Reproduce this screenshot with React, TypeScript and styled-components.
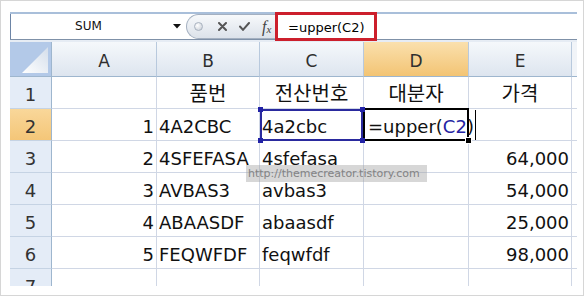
import React from 'react';
import styled, { createGlobalStyle } from 'styled-components';

const GlobalStyle = createGlobalStyle`
  html, body {
    margin: 0;
    padding: 0;
    background: #fff;
  }
  body {
    font-family: "DejaVu Sans", "Noto Sans CJK KR", sans-serif;
  }
`;

const Frame = styled.div`
  box-sizing: border-box;
  width: 584px;
  height: 296px;
  border: 1px solid #d6d6d6;
  padding: 11px 0 0 9px;
  background: #fff;
`;

const ExcelWindow = styled.div`
  width: 567px;
  display: flex;
  flex-direction: column;
  background: #e6ecf4;
`;

const FormulaBar = styled.div`
  display: flex;
  height: 25px;
  border-top: 2px solid #a9bfda;
  border-bottom: 1px solid #7f91a8;
  margin-bottom: 2px;
  background: #fff;
`;

const NameBox = styled.div`
  display: flex;
  align-items: center;
  width: 176px;
  border-left: 1px solid #6d85a6;
  box-sizing: border-box;
  padding-right: 5px;
`;

const NameText = styled.span`
  flex: 1;
  text-align: center;
  padding-right: 7px;
  font-size: 12px;
  line-height: 25px;
  color: #111;
`;

const ButtonStrip = styled.div`
  box-sizing: border-box;
  display: flex;
  align-items: center;
  gap: 12px;
  width: 89px;
  padding-left: 7px;
  border: 1px solid #a4b0c0;
  border-right: none;
  border-radius: 13px 0 0 13px;
  background: linear-gradient(#f7f9fb, #dce2ea);
`;

const Dot = styled.span`
  box-sizing: border-box;
  width: 9px;
  height: 9px;
  margin-right: 3px;
  border-radius: 50%;
  border: 1px solid #a8b2bf;
  background: radial-gradient(circle at 35% 35%, #ffffff, #c3cad3);
`;

const Fx = styled.span`
  font-family: "Liberation Serif", serif;
  font-style: italic;
  font-size: 16px;
  color: #444;
  line-height: 1;

  sub {
    font-size: 11px;
    vertical-align: -1px;
  }
`;

const FormulaInput = styled.div`
  position: relative;
  flex: 1;
  box-sizing: border-box;
  padding: 2px 0 0 13px;
  font-size: 13px;
  line-height: 23px;
  color: #000;
`;

const Annotation = styled.div`
  position: absolute;
  left: 0;
  top: -2px;
  width: 102px;
  height: 29px;
  box-sizing: border-box;
  border: 3px solid #cc1f2c;
`;

const Sheet = styled.div`
  position: relative;
  display: grid;
  grid-template-columns: 42px 105px 103px 104px 105px 103px 5px;
  grid-template-rows: 35px repeat(7, 32px);
  height: 244px;
  overflow: hidden;
  background: #fff;
`;

const Corner = styled.div`
  box-sizing: border-box;
  border-right: 1px solid #9eb6ce;
  border-bottom: 1px solid #9eb6ce;
  background: #b3c9e8;
`;

const ColHead = styled.div<{ $active?: boolean; $blank?: boolean }>`
  box-sizing: border-box;
  display: flex;
  align-items: center;
  justify-content: center;
  padding-top: 4px;
  border-right: ${p => (p.$blank ? 'none' : '1px solid #b8c9dd')};
  border-bottom: 1px solid #9eb6ce;
  background: ${p =>
    p.$active
      ? 'linear-gradient(#fae0ad, #f3c474)'
      : p.$blank
      ? '#f1f4f8'
      : 'linear-gradient(#f5f8fb, #dde5ef)'};
  font-size: 17px;
  line-height: 20px;
  color: #2f2f2f;
`;

const RowHead = styled.div<{ $active?: boolean }>`
  box-sizing: border-box;
  display: flex;
  align-items: flex-end;
  justify-content: center;
  padding-bottom: 3px;
  border-right: 1px solid #9eb6ce;
  border-bottom: 1px solid #c5d3e4;
  background: ${p => (p.$active ? 'linear-gradient(#f9d79a, #f4c678)' : '#e4ecf7')};
  font-size: 18px;
  line-height: 21px;
  color: #333;
`;

type Align = 'left' | 'right' | 'center';

const Cell = styled.div<{ $align: Align; $big?: boolean; $edge?: boolean }>`
  position: relative;
  box-sizing: border-box;
  display: flex;
  align-items: flex-end;
  justify-content: ${p => (p.$align === 'right' ? 'flex-end' : p.$align === 'center' ? 'center' : 'flex-start')};
  padding: 0 2px 3px 2px;
  border-right: ${p => (p.$edge ? 'none' : '1px solid #d0d7e5')};
  border-bottom: 1px solid #d0d7e5;
  font-size: ${p => (p.$big ? '20px' : '18px')};
  line-height: 21px;
  color: #111;
  white-space: nowrap;
`;

const RefCell = styled(Cell)`
  &::before {
    content: '';
    position: absolute;
    left: 0;
    top: 0;
    right: 0;
    bottom: -1px;
    border: 2px solid #2a2a9e;
  }
`;

const Handle = styled.span<{ $x: 'l' | 'r'; $y: 't' | 'b' }>`
  position: absolute;
  width: 5px;
  height: 5px;
  background: #2222a6;
  ${p => (p.$x === 'l' ? 'left: -2px;' : 'right: -2px;')}
  ${p => (p.$y === 't' ? 'top: -2px;' : 'bottom: -3px;')}
  z-index: 3;
`;

const ActiveCell = styled(Cell)`
  z-index: 2;
  padding-left: 4px;

  &::before {
    content: '';
    position: absolute;
    left: -1px;
    top: -1px;
    right: -1px;
    bottom: -1px;
    border: 2px solid #000;
  }

  &::after {
    content: '';
    position: absolute;
    right: -4px;
    bottom: -4px;
    width: 5px;
    height: 5px;
    background: #000;
    border: 1px solid #fff;
  }
`;

const EditText = styled.span`
  position: relative;

  &::after {
    content: '';
    position: absolute;
    right: -2px;
    top: -6px;
    bottom: -3px;
    width: 1px;
    background: #000;
  }
`;

const RefText = styled.span`
  color: #2424a4;
`;

const Watermark = styled.div`
  position: absolute;
  left: 236px;
  top: 123px;
  width: 181px;
  height: 17px;
  box-sizing: border-box;
  padding-left: 2px;
  background: rgba(160, 160, 160, 0.42);
  font-size: 11px;
  line-height: 17px;
  color: #838383;
  white-space: nowrap;
`;

const CornerTriangle = () => (
  <svg width="41" height="34" viewBox="0 0 41 34">
    <defs>
      <linearGradient id="tri" x1="0" y1="1" x2="1" y2="0">
        <stop offset="0" stopColor="#ffffff" />
        <stop offset="1" stopColor="#d4deeb" />
      </linearGradient>
    </defs>
    <polygon points="12,31 38,31 38,5" fill="url(#tri)" />
  </svg>
);

const DropArrow = () => (
  <svg width="8" height="5" viewBox="0 0 8 5">
    <polygon points="0,0 8,0 4,4.5" fill="#111" />
  </svg>
);

const CancelIcon = () => (
  <svg width="9" height="9" viewBox="0 0 9 9">
    <path d="M1 1 L8 8 M8 1 L1 8" stroke="#555" strokeWidth="2" strokeLinecap="round" />
  </svg>
);

const EnterIcon = () => (
  <svg width="11" height="9" viewBox="0 0 11 9">
    <path d="M1 4.5 L4 7.8 L10 1" stroke="#555" strokeWidth="2" fill="none" strokeLinecap="round" />
  </svg>
);

const columns = ['A', 'B', 'C', 'D', 'E'];

const rows: string[][] = [
  ['', '품번', '전산번호', '대분자', '가격'],
  ['1', '4A2CBC', '4a2cbc', '', ''],
  ['2', '4SFEFASA', '4sfefasa', '', '64,000'],
  ['3', 'AVBAS3', 'avbas3', '', '54,000'],
  ['4', 'ABAASDF', 'abaasdf', '', '25,000'],
  ['5', 'FEQWFDF', 'feqwfdf', '', '98,000'],
  ['', '', '', '', ''],
];

const alignFor = (row: number, col: number): Align => {
  if (row === 0) return 'center';
  if (col === 0 || col === 4) return 'right';
  return 'left';
};

export default function App() {
  return (
    <>
      <GlobalStyle />
      <Frame>
        <ExcelWindow>
          <FormulaBar>
            <NameBox>
              <NameText>SUM</NameText>
              <DropArrow />
            </NameBox>
            <ButtonStrip>
              <Dot />
              <CancelIcon />
              <EnterIcon />
              <Fx>
                f<sub>x</sub>
              </Fx>
            </ButtonStrip>
            <FormulaInput>
              =upper(C2)
              <Annotation />
            </FormulaInput>
          </FormulaBar>

          <Sheet>
            <Corner>
              <CornerTriangle />
            </Corner>
            {columns.map(c => (
              <ColHead key={c} $active={c === 'D'}>
                {c}
              </ColHead>
            ))}
            <ColHead $blank />

            {rows.map((row, r) => (
              <React.Fragment key={r}>
                <RowHead $active={r === 1}>{r + 1}</RowHead>
                {row.map((value, c) => {
                  const align = alignFor(r, c);
                  if (r === 1 && c === 2) {
                    return (
                      <RefCell key={c} $align={align}>
                        {value}
                        <Handle $x="l" $y="t" />
                        <Handle $x="l" $y="b" />
                        <Handle $x="r" $y="t" />
                        <Handle $x="r" $y="b" />
                      </RefCell>
                    );
                  }
                  if (r === 1 && c === 3) {
                    return (
                      <ActiveCell key={c} $align={align}>
                        <EditText>
                          =upper(<RefText>C2</RefText>)
                        </EditText>
                      </ActiveCell>
                    );
                  }
                  return (
                    <Cell key={c} $align={align} $big={r === 0}>
                      {value}
                    </Cell>
                  );
                })}
                <Cell $align="left" $edge />
              </React.Fragment>
            ))}

            <Watermark>http://themecreator.tistory.com</Watermark>
          </Sheet>
        </ExcelWindow>
      </Frame>
    </>
  );
}
